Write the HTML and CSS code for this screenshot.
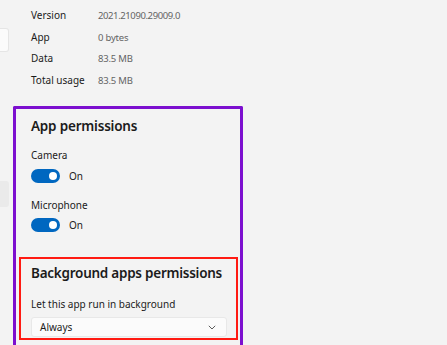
FILE: index.html
```html
<!DOCTYPE html>
<html lang="en">
<head>
  <meta charset="UTF-8">
  <meta name="viewport" content="width=device-width, initial-scale=1.0">
  <title>App settings</title>
  <link rel="stylesheet" href="styles.css">
</head>
<body>
  <div class="page">
    <!-- 잘린 사이드바 -->
    <div class="sidebar">
      <div class="nav-item nav-active"></div>
      <div class="nav-item nav-hover"></div>
    </div>

    <div class="content">
      <div class="specs">
        <div class="spec-row"><span class="spec-label">Version</span><span class="spec-value spec-version">2021.21090.29009.0</span></div>
        <div class="spec-row"><span class="spec-label">App</span><span class="spec-value">0 bytes</span></div>
        <div class="spec-row"><span class="spec-label">Data</span><span class="spec-value">83.5 MB</span></div>
        <div class="spec-row"><span class="spec-label">Total usage</span><span class="spec-value">83.5 MB</span></div>
      </div>

      <div class="perm-box">
        <div class="perm-title">App permissions</div>

        <div class="perm-label">Camera</div>
        <div class="toggle-row">
          <span class="toggle"><span class="knob"></span></span>
          <span class="toggle-text">On</span>
        </div>

        <div class="perm-label">Microphone</div>
        <div class="toggle-row toggle-row-tight">
          <span class="toggle"><span class="knob"></span></span>
          <span class="toggle-text">On</span>
        </div>

        <div class="bg-box">
          <div class="bg-title">Background apps permissions</div>
          <div class="bg-label">Let this app run in background</div>
          <div class="dropdown">
            <span>Always</span>
            <svg class="chevron" width="8" height="5" viewBox="0 0 8 5">
              <path d="M0.8 0.8 L4 4 L7.2 0.8" fill="none" stroke="#5c5c5c" stroke-width="1"/>
            </svg>
          </div>
        </div>
      </div>
    </div>
  </div>
</body>
</html>
```

FILE: styles.css
```css
body {
  margin: 0;
  background-color: #f3f3f3;
  font-family: "Noto Sans", "Open Sans", sans-serif;
  color: #1b1b1b;
  overflow: hidden;
}

.page {
  display: flex;
  height: 345px;
  overflow: hidden;
}

.sidebar {
  width: 9px;
  flex-shrink: 0;
}

.nav-item {
  height: 22px;
  border-radius: 0 3px 3px 0;
}

.nav-active {
  margin-top: 28px;
  background-color: #fbfbfb;
  border: 1px solid #e5e5e5;
  border-left: none;
  width: 8px;
}

.nav-hover {
  margin-top: 129px;
  height: 26px;
  background-color: #eaeaea;
}

.content {
  margin-left: 4px;
  width: 230px;
}

.specs {
  padding: 5px 0 0 18px;
}

.spec-row {
  display: flex;
  height: 21.5px;
  line-height: 21.5px;
  font-size: 10px;
}

.spec-label {
  width: 67px;
}

.spec-value {
  color: #646464;
  font-size: 9.5px;
  letter-spacing: -0.2px;
}

.spec-version {
  letter-spacing: -0.4px;
}

/* 보라색 강조 박스 */
.perm-box {
  margin-top: 15px;
  border: 3px solid #7c0fcf;
  border-bottom: none;
  border-radius: 2px 2px 0 0;
  padding: 7px 0 0 15px;
  height: 239px;
  box-sizing: border-box;
}

.perm-title {
  font-size: 13.5px;
  font-weight: 600;
  line-height: 20px;
  letter-spacing: -0.2px;
}

.perm-label {
  margin-top: 11px;
  font-size: 10px;
  line-height: 16px;
}

.toggle-row {
  display: flex;
  align-items: center;
  gap: 9px;
  margin-top: 3px;
  height: 20px;
}

.toggle-row-tight {
  margin-top: 2px;
}

.toggle {
  display: flex;
  align-items: center;
  justify-content: flex-end;
  width: 29px;
  height: 14px;
  border-radius: 7px;
  background-color: #0067c0;
  padding-right: 3px;
  box-sizing: border-box;
}

.knob {
  width: 8px;
  height: 8px;
  border-radius: 50%;
  background-color: #ffffff;
}

.toggle-text {
  font-size: 10px;
}

/* 빨간색 강조 박스 */
.bg-box {
  margin: 22px 2px 0 -12px;
  border: 2px solid #ff1a12;
  padding: 4px 9px 1px 10px;
}

.bg-title {
  font-size: 13.5px;
  font-weight: 600;
  line-height: 20px;
  letter-spacing: -0.25px;
  white-space: nowrap;
}

.bg-label {
  margin-top: 13px;
  font-size: 10px;
  line-height: 16px;
}

.dropdown {
  margin-top: 5px;
  height: 20px;
  box-sizing: border-box;
  display: flex;
  align-items: center;
  justify-content: space-between;
  padding: 0 10px 0 8px;
  background-color: #fbfbfb;
  border: 1px solid #e8e8e8;
  border-radius: 3px;
  font-size: 10px;
}

.chevron {
  display: block;
}
```
